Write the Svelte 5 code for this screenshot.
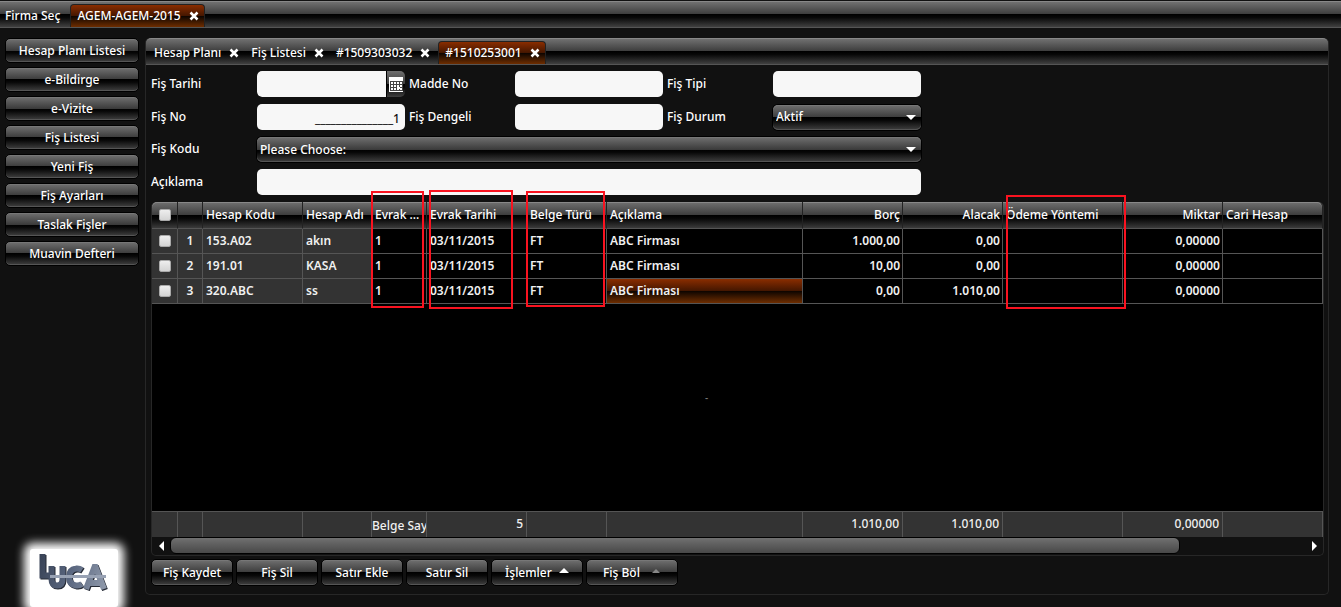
<script>
  const sidebar = ['Hesap Planı Listesi', 'e-Bildirge', 'e-Vizite', 'Fiş Listesi', 'Yeni Fiş', 'Fiş Ayarları', 'Taslak Fişler', 'Muavin Defteri'];
  const tabs = ['Hesap Planı', 'Fiş Listesi', '#1509303032', '#1510253001'];
  const active = '#1510253001';
  const rows = [
    ['153.A02', 'akın', '1', '03/11/2015', 'FT', 'ABC Firması', '1.000,00', '0,00', '', '0,00000', ''],
    ['191.01', 'KASA', '1', '03/11/2015', 'FT', 'ABC Firması', '10,00', '0,00', '', '0,00000', ''],
    ['320.ABC', 'ss', '1', '03/11/2015', 'FT', 'ABC Firması', '0,00', '1.010,00', '', '0,00000', '']
  ];
  const heads = ['Hesap Kodu', 'Hesap Adı', 'Evrak ...', 'Evrak Tarihi', 'Belge Türü', 'Açıklama', 'Borç', 'Alacak', 'Ödeme Yöntemi', 'Miktar', 'Cari Hesap'];
  const numeric = [6, 7, 9];
  const selected = { row: 2, col: 5 };
</script>

{#snippet cross()}
  <svg class="cross" viewBox="0 0 10 10" aria-hidden="true"><path d="M1.500 1.500 8.500 8.500M8.500 1.500 1.500 8.500" stroke="#fff" stroke-width="2.500" /></svg>
{/snippet}

{#snippet columns()}
  <colgroup>
    <col class="w26" /><col class="w25" /><col class="w100" /><col class="w69" /><col class="w55" /><col class="w100" /><col class="w80" /><col /><col class="w100" /><col class="w100" /><col class="w120" /><col class="w100" /><col class="w100" />
  </colgroup>
{/snippet}

{#snippet letters()}
  <path d="M4.500 0v21.500H16" />
  <path d="M13.500 12v13q0 6.500 5.500 6.500t5.500-6.500V12" />
  <path d="M44 16q-3-2-6-1.500-7 1-7 8.500t7 8.500q3 .5 6-1.500" />
  <path d="M48 35 56.500 13h1L66 35M50 29h14" />
{/snippet}

<div class="page">
  <nav class="topbar bar">
    <button class="tab">Firma Seç</button>
    <button class="tab active">AGEM-AGEM-2015 {@render cross()}</button>
  </nav>

  <div class="body">
    <aside>
      {#each sidebar as item}
        <button class="glossy">{item}</button>
      {/each}
      <div class="logo">
        <svg viewBox="0 0 70 37" role="img" aria-label="Luca">
          <defs>
            <linearGradient id="steel" gradientUnits="userSpaceOnUse" x1="0" y1="0" x2="70" y2="20">
              <stop offset="0" stop-color="#364053" />
              <stop offset="0.5" stop-color="#59667f" />
              <stop offset="1" stop-color="#8d97a9" />
            </linearGradient>
          </defs>
          <g fill="none" stroke="#252a35" stroke-width="6" transform="translate(1 1)">{@render letters()}</g>
          <g fill="none" stroke="url(#steel)" stroke-width="6">{@render letters()}</g>
          <path d="M12 21h56v3H12z" fill="#98a2b4" />
        </svg>
      </div>
    </aside>

    <main>
      <nav class="tabs bar">
        {#each tabs as tab}
          <button class="tab" class:active={tab === active}>{tab} {@render cross()}</button>
        {/each}
      </nav>

      <form onsubmit={(e) => e.preventDefault()}>
        <label class="lead" for="date">Fiş Tarihi</label>
        <div class="date">
          <input id="date" type="text" />
          <button type="button" aria-label="Takvim">
            <svg viewBox="0 0 14 15" aria-hidden="true">
              <path d="M0 0h14v15H0z" fill="#fff" />
              <path d="M1 4.500h12M1 7.500h12M1 10.500h12M1 13.500h12M1.500 4v10M4.500 4v10M7.500 4v10M10.500 4v10M13.500 4v10" stroke="#444" />
              <path d="M8 10h3v2H8z" fill="#fff" />
            </svg>
          </button>
        </div>
        <label for="entry">Madde No</label>
        <input id="entry" type="text" />
        <label for="type">Fiş Tipi</label>
        <input id="type" type="text" />

        <label class="lead" for="number">Fiş No</label>
        <input id="number" class="right" type="text" value="_______________1" />
        <label for="balance">Fiş Dengeli</label>
        <input id="balance" type="text" />
        <label for="state">Fiş Durum</label>
        <div class="drop">
          <select id="state"><option>Aktif</option></select>
          <svg viewBox="0 0 10 5" aria-hidden="true"><path d="M0 0h10L5 5z" fill="#fff" /></svg>
        </div>

        <label class="lead" for="code">Fiş Kodu</label>
        <div class="drop wide">
          <select id="code"><option>Please Choose:</option></select>
          <svg viewBox="0 0 10 5" aria-hidden="true"><path d="M0 0h10L5 5z" fill="#fff" /></svg>
        </div>

        <label class="lead" for="note">Açıklama</label>
        <input id="note" class="wide" type="text" />
      </form>

      <section class="grid">
        <table>
          {@render columns()}
          <thead>
            <tr>
              <th class="pick"><input type="checkbox" aria-label="Tümünü seç" /></th>
              <th></th>
              {#each heads as head, i}
                <th class:num={numeric.includes(i)}>{head}</th>
              {/each}
            </tr>
          </thead>
          <tbody>
            {#each rows as row, r}
              <tr>
                <td class="pick fixed"><input type="checkbox" aria-label={row[0]} /></td>
                <td class="index fixed">{r + 1}</td>
                {#each row as cell, c}
                  <td class:fixed={c < 2} class:num={numeric.includes(c)} class:selected={r === selected.row && c === selected.col}>{cell}</td>
                {/each}
              </tr>
            {/each}
          </tbody>
        </table>
        <div class="empty">-</div>
        <table class="totals">
          {@render columns()}
          <tbody>
            <tr>
              <td></td><td></td><td></td><td></td>
              <td class="count">Belge Say</td>
              <td class="num">5</td>
              <td></td><td></td>
              <td class="num">1.010,00</td>
              <td class="num">1.010,00</td>
              <td></td>
              <td class="num">0,00000</td>
              <td></td>
            </tr>
          </tbody>
        </table>
        <div class="scroll">
          <button aria-label="Sola kaydır"><svg viewBox="0 0 5 10"><path d="M5 0v10L0 5z" fill="#fff" /></svg></button>
          <div class="track"><div class="thumb"></div></div>
          <button aria-label="Sağa kaydır"><svg viewBox="0 0 5 10"><path d="M0 0v10l5-5z" fill="#fff" /></svg></button>
        </div>
        <span class="mark m1"></span>
        <span class="mark m2"></span>
        <span class="mark m3"></span>
        <span class="mark m4"></span>
      </section>

      <div class="actions">
        <button class="glossy">Fiş Kaydet</button>
        <button class="glossy">Fiş Sil</button>
        <button class="glossy">Satır Ekle</button>
        <button class="glossy">Satır Sil</button>
        <button class="glossy menu">İşlemler <svg viewBox="0 0 10 5"><path d="M0 5h10L5 0z" fill="#fff" /></svg></button>
        <button class="glossy menu off">Fiş Böl <svg viewBox="0 0 10 5"><path d="M1 5h8L5 1z" fill="#888" /></svg></button>
      </div>
    </main>
  </div>
</div>

<style>
  :global(body) {
    margin: 0;
    background: #111;
  }
  * {
    box-sizing: border-box;
  }
  .page {
    --gloss: linear-gradient(#707070, #3b3b3b 50%, #000 50%, #080808 62%, #404040);
    --ember: linear-gradient(#8a2d00, #431600 50%, #0c0400 50%, #6e2d00);
    display: flex;
    flex-direction: column;
    height: 100vh;
    min-height: 480px;
    overflow: hidden;
    background: #111;
    color: #fff;
    font: 500 12px/16px "Noto Sans", sans-serif;
  }
  button, input, select {
    margin: 0;
    font: inherit;
    color: inherit;
  }
  button {
    padding: 0;
    border: 0;
    background: none;
    white-space: nowrap;
  }
  .bar {
    display: flex;
    flex: none;
    align-items: flex-end;
    background: var(--gloss);
    border-top: 1px solid #888;
    border-bottom: 1px solid #555;
  }
  .topbar {
    height: 27px;
    margin-top: 1px;
  }
  .tab {
    display: flex;
    align-items: center;
    gap: 8px;
    height: 23px;
    padding: 0 5px;
    border: 1px solid transparent;
    border-bottom: 0;
    border-radius: 4px 4px 0 0;
  }
  .topbar .tab:first-child {
    padding: 0 9px 0 4px;
  }
  .tab.active {
    padding: 0 5px 0 6px;
    background: var(--ember);
    border-color: #222;
  }
  .tabs .tab.active {
    margin-left: 2px;
  }
  .cross {
    width: 10px;
    height: 10px;
  }
  .body {
    display: flex;
    flex: 1;
    min-height: 0;
    padding: 10px 12px 0 5px;
  }
  aside {
    display: flex;
    flex-direction: column;
    flex: none;
    width: 134px;
    gap: 4px;
    margin-right: 6px;
  }
  .glossy {
    flex: none;
    height: 25px;
    padding-top: 1px;
    border: 1px solid #000;
    border-radius: 5px;
    background: var(--gloss);
    box-shadow: inset 0 1px #777, inset 0 -1px #555;
  }
  .logo {
    flex: none;
    width: 88px;
    margin: auto 0 0 25px;
    padding: 5px 8px 16px;
    border-radius: 3px;
    background: #fff;
    box-shadow: 0 0 10px 6px #fff;
  }
  .logo svg {
    display: block;
    width: 70px;
    height: 37px;
  }
  main {
    display: flex;
    flex: 1;
    flex-direction: column;
    min-width: 0;
    margin-bottom: 12px;
    border: 1px solid #272727;
    border-top: 0;
    border-radius: 5px;
  }
  .tabs {
    height: 27px;
    padding-left: 2px;
    border-radius: 5px 5px 0 0;
  }
  form {
    display: grid;
    grid-template-columns: 106px 148px 110px 148px 110px 148px;
    grid-template-rows: 26px 26px 25px 26px;
    row-gap: 7px;
    align-items: center;
    padding: 6px 0 0 5px;
  }
  label {
    padding: 0 0 1px 4px;
  }
  label.lead {
    padding-left: 0;
  }
  input[type="text"] {
    width: 100%;
    height: 26px;
    padding: 4px 5px 2px;
    border: 0;
    border-radius: 5px;
    background: #f7f7f7;
    color: #111;
  }
  .right {
    text-align: right;
  }
  .wide {
    grid-column: 2 / -1;
  }
  .date {
    display: flex;
    height: 26px;
    overflow: hidden;
    border-radius: 5px;
    background: var(--gloss);
  }
  .date input[type="text"] {
    flex: 1;
    min-width: 0;
    border-radius: 5px 0 0 5px;
  }
  .date button {
    width: 19px;
    border-left: 1px solid #000;
  }
  .date svg {
    display: block;
    width: 14px;
    height: 15px;
    margin: 1px 0 0 2px;
  }
  .drop {
    display: flex;
    align-items: center;
    height: 25px;
    padding-right: 5px;
    border-radius: 5px;
    background: var(--gloss);
    box-shadow: 0 0 0 1px #000, inset 0 1px #777, inset 0 -1px #555;
  }
  .drop select {
    flex: 1;
    padding: 0 3px;
    border: 0;
    appearance: none;
    background: none;
  }
  .drop svg {
    width: 10px;
    height: 5px;
  }
  .grid {
    position: relative;
    display: flex;
    flex: 1;
    flex-direction: column;
    margin: 7px 4px 0 5px;
    border: 1px solid #272727;
    border-top: 0;
    border-radius: 5px;
  }
  table {
    width: 100%;
    table-layout: fixed;
    border-collapse: separate;
    border-spacing: 0;
  }
  .w25 { width: 25px; }
  .w26 { width: 26px; }
  .w55 { width: 55px; }
  .w69 { width: 69px; }
  .w80 { width: 80px; }
  .w100 { width: 100px; }
  .w120 { width: 120px; }
  thead tr {
    background: var(--gloss);
  }
  th, td {
    height: 25px;
    padding: 0 2px 0 3px;
    overflow: hidden;
    border-right: 1px solid #555;
    border-bottom: 1px solid #555;
    text-align: left;
    white-space: nowrap;
  }
  th {
    height: 27px;
    padding-bottom: 1px;
    border-right-color: #222;
    box-shadow: inset 0 1px #888;
    font-weight: 500;
  }
  th:first-child {
    border-top-left-radius: 5px;
  }
  th:last-child {
    border-top-right-radius: 5px;
  }
  td {
    background: #000;
    color: #f0f0f0;
    font-weight: 600;
  }
  td.fixed {
    background: #333;
  }
  td.selected {
    background: var(--ember);
  }
  .num {
    text-align: right;
  }
  td.index, .pick {
    padding: 0;
    text-align: center;
  }
  .pick input {
    display: block;
    width: 12px;
    height: 12px;
    margin: 0 auto;
    appearance: none;
    border: 1px solid #aaa;
    border-radius: 2px;
    background: linear-gradient(#eee, #d4d4d4);
  }
  .empty {
    display: flex;
    flex: 1;
    align-items: center;
    justify-content: center;
    background: #000;
    color: #777;
    font-size: 10px;
    padding: 0 62px 20px 0;
  }
  .totals td {
    height: 26px;
    padding: 0 3px 2px;
    border-top: 1px solid #555;
    border-bottom: 0;
    background: #333;
    font-weight: 500;
  }
  .totals .count {
    padding: 2px 0 0;
  }
  .scroll {
    display: flex;
    align-items: flex-start;
    height: 18px;
  }
  .scroll button {
    display: flex;
    align-items: center;
    justify-content: center;
    width: 18px;
    height: 17px;
  }
  .scroll svg {
    width: 5px;
    height: 10px;
  }
  .track {
    flex: 1;
  }
  .thumb {
    width: 89%;
    height: 17px;
    border: 1px solid #000;
    border-radius: 6px;
    background: linear-gradient(#707070, #484848);
  }
  .mark {
    position: absolute;
    border: 2px solid #f91320;
    pointer-events: none;
  }
  .m1 { left: 219px; top: -11px; width: 53px; height: 117px; }
  .m2 { left: 277px; top: -12px; width: 84px; height: 119px; }
  .m3 { left: 374px; top: -11px; width: 79px; height: 116px; }
  .m4 { right: 197px; top: -7px; width: 120px; height: 114px; }
  .actions {
    display: flex;
    gap: 3px;
    padding: 3px 0 8px 5px;
  }
  .actions .glossy {
    width: 82px;
    height: 27px;
  }
  .actions .menu {
    width: 92px;
  }
  .menu svg {
    width: 10px;
    height: 5px;
    margin: 0 0 4px 4px;
  }
  .off svg {
    margin-left: 8px;
  }
</style>
